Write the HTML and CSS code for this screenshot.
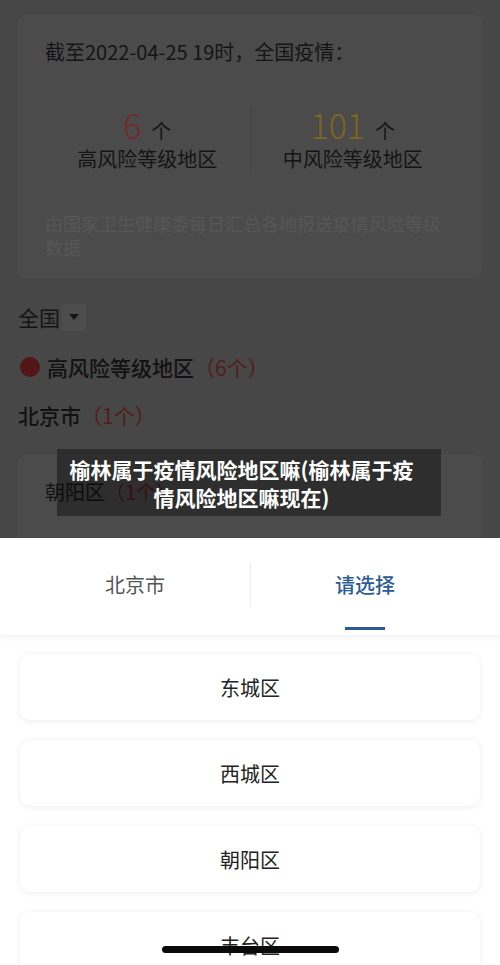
FILE: index.html
```html
<!DOCTYPE html>
<html lang="zh-CN">
<head>
<meta charset="utf-8">
<title>榆林属于疫情风险地区嘛</title>
<link rel="stylesheet" href="styles.css">
</head>
<body>
<div class="screen">
  <div class="backdrop">
    <div class="summary">
      <div class="summary-title">截至2022-04-25 19时，全国疫情：</div>
      <div class="stats">
        <div class="stat">
          <div class="stat-num"><span class="num high">6</span><span class="unit">个</span></div>
          <div class="stat-label">高风险等级地区</div>
        </div>
        <div class="stat stat-split">
          <div class="stat-num"><span class="num mid">101</span><span class="unit">个</span></div>
          <div class="stat-label">中风险等级地区</div>
        </div>
      </div>
      <div class="note">由国家卫生健康委每日汇总各地报送疫情风险等级数据</div>
    </div>

    <div class="region-select">全国<span class="caret"><svg width="12" height="8" viewBox="0 0 12 8"><path d="M1 1h10L6 7z" fill="#161616"/></svg></span></div>

    <div class="risk-head"><span class="dot"></span>高风险等级地区<span class="count">（6个）</span></div>
    <div class="city">北京市<span class="count">（1个）</span></div>
    <div class="district-card">朝阳区<span class="count">（1个）</span></div>
  </div>

  <div class="caption">榆林属于疫情风险地区嘛(榆林属于疫情风险地区嘛现在)</div>

  <div class="sheet">
    <div class="tabs">
      <div class="tab">北京市</div>
      <div class="tab tab-active">请选择</div>
    </div>
    <div class="options">
      <div class="option">东城区</div>
      <div class="option">西城区</div>
      <div class="option">朝阳区</div>
      <div class="option">丰台区</div>
    </div>
  </div>

  <div class="home-bar"></div>
</div>
</body>
</html>
```

FILE: styles.css
```css
* { box-sizing: border-box; }
html, body { margin: 0; padding: 0; }
body {
  font-family: "Noto Sans CJK SC", "Noto Sans", sans-serif;
  background: #ffffff;
}
.screen {
  position: relative;
  width: 500px;
  height: 965px;
  overflow: hidden;
  display: flex;
  flex-direction: column;
}
.backdrop {
  height: 538px;
  flex: none;
  background: #474747;
  padding: 15px 18px 0;
  overflow: hidden;
  color: #121212;
}
.summary {
  background: #4b4b4b;
  border: 1px solid #4e4e4e;
  border-radius: 8px;
  padding: 22px 26px 18px;
}
.summary-title {
  font-size: 20px;
  line-height: 28px;
  color: #141414;
}
.stats {
  display: flex;
  margin-top: 39px;
}
.stat {
  flex: 1;
  text-align: center;
}
.stat-split {
  border-left: 1px solid #444444;
}
.stat-num {
  height: 40px;
  line-height: 40px;
  display: flex;
  justify-content: center;
  align-items: baseline;
}
.num {
  font-size: 34px;
  font-weight: 300;
}
.num.high { color: #73292a; }
.num.mid { color: #80641f; }
.unit {
  font-size: 20px;
  margin-left: 10px;
  color: #141414;
}
.stat-label {
  font-size: 20px;
  line-height: 28px;
  color: #141414;
}
.note {
  margin-top: 38px;
  font-size: 18px;
  line-height: 24px;
  color: #575757;
}
.region-select {
  margin-top: 25px;
  font-size: 21px;
  line-height: 28px;
  display: flex;
  align-items: center;
  color: #141414;
}
.caret {
  display: inline-flex;
  align-items: center;
  justify-content: center;
  width: 24px;
  height: 27px;
  margin-left: 2px;
  background: #4d4d4d;
}
.risk-head {
  margin-top: 22px;
  display: flex;
  align-items: center;
  font-size: 21px;
  line-height: 28px;
  font-weight: 500;
  color: #121212;
}
.dot {
  width: 20px;
  height: 20px;
  border-radius: 50%;
  background: #521616;
  margin-left: 2px;
  margin-right: 7px;
}
.count {
  color: #541b1b;
  font-weight: 400;
}
.city {
  margin-top: 20px;
  font-size: 21px;
  line-height: 28px;
  font-weight: 500;
  color: #121212;
}
.district-card {
  margin-top: 26px;
  background: #4b4b4b;
  border: 1px solid #4e4e4e;
  border-radius: 8px;
  padding: 22px 26px 40px;
  font-size: 20px;
  line-height: 28px;
  color: #141414;
}
.caption {
  position: absolute;
  left: 57px;
  top: 449px;
  width: 384px;
  height: 67px;
  padding: 6px 26px 5px 11px;
  background: rgba(0, 0, 0, 0.38);
  color: #ffffff;
  font-size: 21px;
  font-weight: 700;
  line-height: 28px;
  text-align: center;
}
.sheet {
  flex: 1;
  background: #ffffff;
  display: flex;
  flex-direction: column;
}
.tabs {
  display: flex;
  height: 97px;
  padding: 0 20px;
  box-shadow: 0 3px 6px rgba(0, 0, 0, 0.05);
  position: relative;
}
.tab {
  flex: 1;
  position: relative;
  text-align: center;
  font-size: 20px;
  line-height: 28px;
  padding-top: 33px;
  color: #555555;
}
.tab + .tab::before {
  content: "";
  position: absolute;
  left: 0;
  top: 25px;
  height: 44px;
  border-left: 1px solid #ececec;
}
.tab-active {
  color: #2c5a97;
  font-weight: 500;
}
.tab-active::after {
  content: "";
  position: absolute;
  left: 50%;
  bottom: 5px;
  width: 40px;
  margin-left: -20px;
  height: 3px;
  background: #2c5a97;
}
.options {
  padding: 19px 20px 0;
  display: flex;
  flex-direction: column;
  gap: 20px;
}
.option {
  height: 66px;
  flex: none;
  border-radius: 10px;
  background: #ffffff;
  box-shadow: 0 1px 6px rgba(0, 0, 0, 0.08);
  display: flex;
  align-items: center;
  justify-content: center;
  font-size: 20px;
  color: #222222;
}
.home-bar {
  position: absolute;
  left: 162px;
  top: 946px;
  width: 177px;
  height: 7px;
  border-radius: 4px;
  background: #0a0a0a;
}
```
